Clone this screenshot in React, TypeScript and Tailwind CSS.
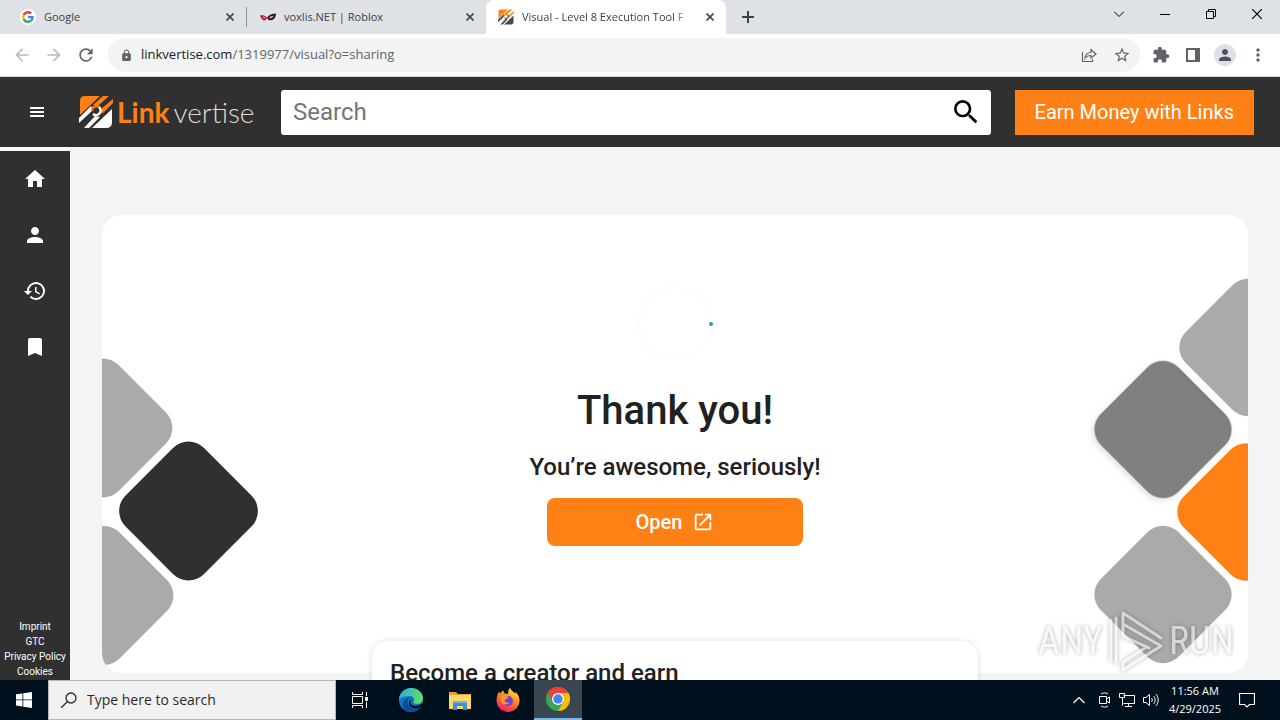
import type { ReactNode } from "react";
import {
  MdArrowBack,
  MdArrowForward,
  MdBookmark,
  MdExtension,
  MdHistory,
  MdHome,
  MdLock,
  MdMoreVert,
  MdOpenInNew,
  MdPerson,
  MdRefresh,
  MdSearch,
  MdStarBorder,
} from "react-icons/md";

function GoogleIcon() {
  return (
    <svg viewBox="0 0 48 48" className="size-3">
      <path fill="#ea4335" d="M24 9.5c3.54 0 6.71 1.22 9.21 3.6l6.85-6.85C35.9 2.38 30.47 0 24 0 14.62 0 6.51 5.38 2.56 13.22l7.98 6.19C12.43 13.72 17.74 9.5 24 9.5z" />
      <path fill="#4285f4" d="M46.98 24.55c0-1.57-.15-3.09-.38-4.55H24v9.02h12.94c-.58 2.96-2.26 5.48-4.78 7.18l7.73 6c4.51-4.18 7.09-10.36 7.09-17.65z" />
      <path fill="#fbbc05" d="M10.53 28.59c-.48-1.45-.76-2.99-.76-4.59s.27-3.14.76-4.59l-7.98-6.19C.92 16.46 0 20.12 0 24c0 3.88.92 7.54 2.56 10.78l7.97-6.19z" />
      <path fill="#34a853" d="M24 48c6.48 0 11.93-2.13 15.89-5.81l-7.73-6c-2.15 1.45-4.92 2.3-8.16 2.3-6.26 0-11.57-4.22-13.47-9.91l-7.98 6.19C6.51 42.62 14.62 48 24 48z" />
    </svg>
  );
}

function MaskIcon() {
  return (
    <svg viewBox="0 0 16 16" className="size-4">
      <path fill="#b3202f" d="M0 6.500c2-.6 4.500-.4 7 2-.3 2-1.500 3-3 3C2.500 11.300 1 9.500 0 6.500z" />
      <path fill="#3a1418" d="M7 8.500c2-2.800 5-4 9-4-.2 4-2 6.500-5 6.800-2 .2-3.500-.8-4-2.800z" />
      <path fill="#e9a9af" d="M2.500 7.800c1.500 0 2.500.5 3 1.300-1.200.7-2.500.2-3-1.300zM9 9c1-1.500 2.500-2.300 4.500-2.300C12.800 8.700 11 9.900 9 9z" />
    </svg>
  );
}

function LinkMark({ lower, className }: { lower: string; className: string }) {
  return (
    <svg viewBox="0 0 34 34" className={className} fill="none">
      <path fill="#ff8014" d="M1 6q0-5 5-5h15L1 20z" />
      <path fill="#ff8014" d="M24 1h6L19 11l-5-1z" />
      <path fill="#ff8014" d="M34 4v4L23 19l-2-4z" />
      <path fill={lower} d="M0 28v-5l12-12 2 4z" />
      <path fill={lower} d="M33 14v13q0 6-6 6H13z" />
      <path fill={lower} d="M5 33l11-12 5 1-11 11z" />
      <path stroke="#ff8014" strokeWidth="2.200" d="M13 16a4.500 4.500 0 0 1 7-4" />
      <path stroke={lower} strokeWidth="2.400" d="M20 12a4.500 4.500 0 1 1-6 7" />
    </svg>
  );
}

function CloseIcon() {
  return (
    <svg viewBox="0 0 8 8" className="size-2" stroke="#45494d" strokeWidth="1.700">
      <path d="M.5.5l7 7M7.500.5l-7 7" />
    </svg>
  );
}

type TabProps = { icon: ReactNode; title: string; active?: boolean };

function Tab({ icon, title, active }: TabProps) {
  return (
    <div className={active ? "flex items-center w-60 h-full pl-3 pr-2 rounded-t-lg bg-white" : "flex items-center w-60 h-full pl-[14px] pr-2"}>
      <span className="flex items-center justify-center size-4 mr-2 shrink-0">{icon}</span>
      <span className={active ? "flex-1 overflow-hidden whitespace-nowrap mr-2 mask-r-from-88% mask-r-to-100%" : "flex-1 overflow-hidden whitespace-nowrap"}>{title}</span>
      <button aria-label={`Close ${title}`} className="shrink-0 p-1">
        <CloseIcon />
      </button>
    </div>
  );
}

function TabStrip() {
  return (
    <div className="flex items-center h-[34px] pl-[6px] bg-[#dee1e6] text-[#3c4043] text-[11px] font-['Open_Sans','Noto_Sans',sans-serif]">
      <Tab title="Google" icon={<span className="flex items-center justify-center size-4 rounded-full bg-white"><GoogleIcon /></span>} />
      <span className="w-px h-5 -mr-px bg-[#8a8d92]" />
      <Tab title="voxlis.NET | Roblox" icon={<MaskIcon />} />
      <Tab active title="Visual - Level 8 Execution Tool F" icon={<LinkMark lower="#4a4a4e" className="size-4" />} />
      <button aria-label="New tab" className="p-4">
        <svg viewBox="0 0 12 12" className="size-3" stroke="#3c4043" strokeWidth="2">
          <path d="M6 0v12M0 6h12" />
        </svg>
      </button>
      <div className="flex items-center gap-9 ml-auto mb-[6px] pr-[18px] text-black">
        <button aria-label="Search tabs">
          <svg viewBox="0 0 10 10" className="size-[10px]" fill="none" stroke="currentColor">
            <path d="M0 2.500l5 5 5-5" />
          </svg>
        </button>
        <button aria-label="Minimize">
          <svg viewBox="0 0 10 10" className="size-[10px]" stroke="currentColor">
            <path d="M0 5.500h10" />
          </svg>
        </button>
        <button aria-label="Restore">
          <svg viewBox="0 0 10 10" className="size-[10px]" fill="none" stroke="currentColor">
            <path d="M.5 2.500h7v7h-7zM2.500 2.500v-2h7v7h-2" />
          </svg>
        </button>
        <button aria-label="Close window">
          <svg viewBox="0 0 10 10" className="size-[10px]" stroke="currentColor" strokeWidth="1.200">
            <path d="M0 0l10 10M10 0L0 10" />
          </svg>
        </button>
      </div>
    </div>
  );
}

function Toolbar() {
  return (
    <div className="flex items-center h-[43px] px-3 border-b border-[#d5d7d9] bg-white text-[#5f6368]">
      <button aria-label="Back" className="mr-3 text-[#b9bbbe]"><MdArrowBack className="size-5" /></button>
      <button aria-label="Forward" className="mr-3 text-[#b9bbbe]"><MdArrowForward className="size-5" /></button>
      <button aria-label="Reload" className="mr-3"><MdRefresh className="size-5" /></button>
      <div className="flex items-center flex-1 h-[34px] pl-3 pr-[9px] rounded-full bg-[#f1f3f4] font-['Open_Sans','Noto_Sans',sans-serif] text-[13px]">
        <MdLock className="size-[13px] mr-2" />
        <p className="flex-1"><span className="text-[#202124]">linkvertise.com</span>/1319977/visual?o=sharing</p>
        <button aria-label="Share" className="mr-4">
          <svg viewBox="0 0 16 16" className="size-4" fill="none" stroke="currentColor" strokeWidth="1.200">
            <path d="M1.500 5v9.500h10V12M4 11c.5-4 3-5.500 6-5.500V2.500L15 7l-5 4V8.500c-2.500 0-4.500.5-6 2.500z" />
          </svg>
        </button>
        <button aria-label="Bookmark this tab"><MdStarBorder className="size-[18px]" /></button>
      </div>
      <button aria-label="Extensions" className="ml-3"><MdExtension className="size-[18px]" /></button>
      <button aria-label="Side panel" className="ml-4">
        <svg viewBox="0 0 14 14" className="size-[14px]" fill="none" stroke="currentColor" strokeWidth="2">
          <path d="M1 1h12v12H1z" />
          <path fill="currentColor" stroke="none" d="M9 0h5v14H9z" />
        </svg>
      </button>
      <button aria-label="Profile" className="flex items-center justify-center size-[22px] ml-[14px] rounded-full bg-[#dee1e6] text-[#4d5168]">
        <MdPerson className="size-[18px]" />
      </button>
      <button aria-label="Menu" className="ml-3"><MdMoreVert className="size-5" /></button>
    </div>
  );
}

function Header() {
  return (
    <header className="flex items-center h-[70px] pr-[26px] bg-[#303030] text-white">
      <button aria-label="Open menu" className="ml-[30px] mr-[35px]">
        <svg viewBox="0 0 14 10" className="w-[14px] h-[10px]" fill="currentColor">
          <path d="M0 0h14v2H0zM0 4h14v2H0zM0 8h14v2H0z" />
        </svg>
      </button>
      <a href="#" className="flex items-center w-[178px] mr-6">
        <LinkMark lower="#ffffff" className="size-[34px] shrink-0 mr-1" />
        <span className="flex gap-1 text-[28px] leading-8 font-['Lato',sans-serif] whitespace-nowrap">
          <b className="text-[#ff8014]">Link</b>
          <span className="font-light text-[#dcdcdc]">vertise</span>
        </span>
      </a>
      <div className="flex items-center flex-1 h-[45px] pl-3 pr-[9px] rounded-[3px] bg-white">
        <input aria-label="Search" placeholder="Search" className="flex-1 min-w-0 text-2xl text-black placeholder:text-[#757575] outline-none" />
        <button aria-label="Submit search" className="text-black"><MdSearch className="size-8" /></button>
      </div>
      <button className="h-[45px] ml-6 px-5 bg-[#ff8014] text-xl">Earn Money with Links</button>
    </header>
  );
}

const NAV = [
  { label: "Home", Icon: MdHome },
  { label: "Account", Icon: MdPerson },
  { label: "History", Icon: MdHistory },
  { label: "Bookmarks", Icon: MdBookmark },
];

const LEGAL = ["Imprint", "GTC", "Privacy Policy", "Cookies"];

function Sidebar() {
  return (
    <aside className="flex flex-col items-center w-[70px] shrink-0 pt-4 pb-px border-t-4 border-[#fafafa] bg-[#303030] text-white">
      <nav className="flex flex-col gap-8">
        {NAV.map(({ label, Icon }) => (
          <a key={label} href="#" aria-label={label}><Icon className="size-6" /></a>
        ))}
      </nav>
      <div className="flex flex-col items-center mt-auto text-[10px] leading-[15px]">
        {LEGAL.map((label) => (
          <a key={label} href="#">{label}</a>
        ))}
      </div>
    </aside>
  );
}

function Diamond({ x, y, size, fill, shadow }: { x: number; y: number; size: number; fill: string; shadow?: boolean }) {
  return (
    <rect
      x={-size / 2}
      y={-size / 2}
      width={size}
      height={size}
      rx="22"
      fill={fill}
      transform={`translate(${x} ${y}) rotate(45)`}
      className={shadow ? "drop-shadow-md" : undefined}
    />
  );
}

function ThankYouCard() {
  return (
    <section className="relative flex flex-col items-center pt-[70px] pb-[127px] rounded-[20px] bg-white text-[#212121] overflow-hidden">
      <svg width="160" height="458" className="absolute left-0 top-0">
        <Diamond x={1} y={213} size={111} fill="#aaaaaa" />
        <Diamond x={86.5} y={296} size={111} fill="#303030" />
        <Diamond x={2} y={380.5} size={111} fill="#aaaaaa" />
      </svg>
      <svg width="160" height="458" className="absolute right-0 top-0">
        <Diamond x={160} y={132.5} size={110} fill="#aaaaaa" />
        <Diamond x={75} y={214.5} size={110} fill="#808080" shadow />
        <Diamond x={158} y={297} size={110} fill="#ff8014" />
        <Diamond x={75} y={379.5} size={110} fill="#aaaaaa" />
      </svg>
      <svg viewBox="0 0 76 76" className="size-[76px]" fill="none">
        <circle cx="38" cy="38" r="36" stroke="#fcfcfc" strokeWidth="2" />
        <circle cx="74" cy="39" r="2" fill="#1fa79a" />
      </svg>
      <h1 className="mt-[26px] text-[40px] leading-[48px] font-medium">Thank you!</h1>
      <h2 className="mt-4 text-2xl leading-8 font-medium">You’re awesome, seriously!</h2>
      <button className="flex items-center justify-center w-64 h-12 mt-[15px] rounded-lg bg-[#ff8014] text-white text-xl font-medium">
        Open <MdOpenInNew className="size-[22px] ml-[10px]" />
      </button>
    </section>
  );
}

function Watermark() {
  return (
    <div className="absolute right-[46px] bottom-2 flex items-center opacity-60 text-[38px] leading-10 text-[#f4f4f4] drop-shadow-[0_0_2px_rgba(0,0,0,0.5)] font-['Liberation_Sans_Narrow','Roboto_Condensed',sans-serif]">
      ANY
      <svg viewBox="0 0 66 62" className="w-[66px] h-[62px]" fill="none" stroke="#f4f4f4" strokeWidth="3" strokeLinejoin="round" strokeLinecap="round">
        <path d="M8 10v40M13 8v44M58 28L20 3v23l26 12M20 26V14l38 22-38 24v-8l22-14" />
      </svg>
      RUN
    </div>
  );
}

function EdgeIcon() {
  return (
    <svg viewBox="0 0 24 24" className="size-6">
      <defs>
        <linearGradient id="edge-top" x1="0" y1="0" x2="1" y2=".3">
          <stop stopColor="#2aa7e8" />
          <stop offset="1" stopColor="#5fdc6a" />
        </linearGradient>
      </defs>
      <circle cx="12" cy="12" r="12" fill="#1273c8" />
      <path fill="url(#edge-top)" d="M0 12C0 5 5.500 0 12 0c7 0 12 5 12 10 0 4-3 6-6 6-2.500 0-4-1-3.500-2 2-4-1-6-4-6C6 8 2 9 0 12z" />
      <path fill="#0b4c97" d="M9 12c-2 6 4 10 12 7.500C17 25 8 25.500 4.500 20 2.500 15 5 11 11 9c-1 .8-1.600 1.800-2 3z" />
      <path fill="#000d18" d="M13.500 11.500c-3 1-2.500 5 .5 6 3 1 6 0 9-2l1 1.500-3 2.500c-6 2-12-1-11-5 .3-1.500 1.500-3 3.500-3z" />
    </svg>
  );
}

function FolderIcon() {
  return (
    <svg viewBox="0 0 22 19" className="w-[22px] h-[19px]">
      <path fill="#e8a33a" d="M0 1h7l2 2h13v14H0z" />
      <path fill="#ffd76b" d="M0 4h22v14H0z" />
      <path fill="#3f8fd0" d="M4 19v-8h14v8h-4v-4H8v4z" />
      <path fill="#6db6e8" d="M4 10h14v2H4z" />
    </svg>
  );
}

function FirefoxIcon() {
  return (
    <svg viewBox="0 0 24 24" className="size-6">
      <defs>
        <linearGradient id="fox" x1=".8" y1="0" x2=".3" y2="1">
          <stop stopColor="#fff14f" />
          <stop offset=".45" stopColor="#ff8a16" />
          <stop offset="1" stopColor="#f5156c" />
        </linearGradient>
      </defs>
      <path fill="url(#fox)" d="M14 0c1 3 4 3.500 5.500 6 0-1 0-1.500-.3-2.500C22 6 23.500 9 23.500 12.500 23.500 19 18 24 12 24S.5 19 .5 12.500C.5 9 1.500 6 3 3.500c.3 1 .6 1.500 1.200 2C5 4 6 3 7.500 2.500c0 1.500.5 2.500 2 3.200L12 6c0-2 .5-4.500 2-6z" />
      <circle cx="12" cy="13" r="5" fill="#7542d8" />
      <path fill="#ff9b21" d="M5 8c3-1.500 6-.5 7.500 2-2 0-2 1.500-4 2 0 2 2 3.500 5 2.500-1.500 2.500-6 3-8-.5C4.500 12 4.500 10 5 8z" />
    </svg>
  );
}

function ChromeIcon() {
  return (
    <svg viewBox="0 0 24 24" className="size-6">
      <circle cx="12" cy="12" r="12" fill="#34a853" />
      <path fill="#ea4335" d="M12 12L1.600 6a12 12 0 0 1 20.800 0z" />
      <path fill="#ea4335" d="M1.600 6L7 15l5-9h10.400A12 12 0 0 0 1.600 6z" />
      <path fill="#fbbc04" d="M22.400 6A12 12 0 0 1 12 24l5.200-9L12 6z" />
      <circle cx="12" cy="12" r="6" fill="#fff" />
      <circle cx="12" cy="12" r="4.700" fill="#4285f4" />
    </svg>
  );
}

function Taskbar() {
  return (
    <footer className="flex items-center h-10 bg-[#00111d] text-white shrink-0">
      <button aria-label="Start" className="flex items-center justify-center w-12 h-full">
        <svg viewBox="0 0 16 16" className="size-4" fill="#fff">
          <path d="M0 2.300l6.500-.9v6.100H0zM7.300 1.300L16 0v7.500H7.300zM0 8.300h6.500v6.200L0 13.600zM7.300 8.300H16V16l-8.700-1.300z" />
        </svg>
      </button>
      <label className="flex items-center w-72 h-full pl-3 border border-[#b8b8b8] bg-[#f1f1f1] text-[#2b2b2b]">
        <svg viewBox="0 0 16 16" className="size-4 mr-[10px]" fill="none" stroke="currentColor" strokeWidth="1.300">
          <circle cx="10" cy="6" r="5" />
          <path d="M6.500 9.500L0 16" />
        </svg>
        <input aria-label="Type here to search" placeholder="Type here to search" className="flex-1 min-w-0 text-sm placeholder:text-[#2b2b2b] outline-none font-['Open_Sans','Noto_Sans',sans-serif]" />
      </label>
      <button aria-label="Task view" className="flex items-center justify-center w-12 h-full">
        <svg viewBox="0 0 16 16" className="size-4" fill="none" stroke="#fff">
          <path d="M.5 0v2.500h10V0M.5 16v-2.500h10V16M.5 4.500h10v7H.5zM14.500 0v4M14.500 10v6" />
          <path fill="#fff" d="M13.500 5.500h2v3h-2z" />
        </svg>
      </button>
      <button aria-label="Edge" className="flex items-center justify-center w-[54px] h-full"><EdgeIcon /></button>
      <button aria-label="File Explorer" className="flex items-center justify-center w-11 h-full"><FolderIcon /></button>
      <button aria-label="Firefox" className="flex items-center justify-center w-[52px] h-full"><FirefoxIcon /></button>
      <button aria-label="Chrome" className="flex items-center justify-center w-12 h-full border-b-2 border-[#76b9ed] bg-[#3b4750]"><ChromeIcon /></button>
      <div className="flex items-center gap-2 ml-auto pr-[25px]">
        <svg viewBox="0 0 12 8" className="w-3 h-2 mr-[6px]" fill="none" stroke="#fff" strokeWidth="1.200">
          <path d="M.5 7L6 1.500 11.500 7" />
        </svg>
        <svg viewBox="0 0 12 16" className="w-3 h-4" fill="none" stroke="#fff">
          <path d="M.5 4.500h7v7h-7zM7.500 7l3-2v6l-3-2M2 2c2-1.500 5-1.500 7 0M2 14c2 1.500 5 1.500 7 0" />
        </svg>
        <svg viewBox="0 0 16 14" className="w-4 h-[14px]" fill="none" stroke="#fff">
          <path d="M4.500 2.500h11v8h-11M.5.5h5v4h-5zM3.500 4.500v8M6 13.500h7M9.500 10.500v3" />
        </svg>
        <svg viewBox="0 0 16 14" className="w-4 h-[14px]" fill="none" stroke="#fff">
          <path d="M.5 4.500H3l3.500-3v11L3 9.500H.5zM8.500 5c1 1 1 3 0 4M10.500 3c2.200 2 2.200 6 0 8M12.700 1c3.300 3 3.300 9 0 12" />
        </svg>
        <div className="w-14 text-center text-[11px] leading-[18px] font-['Open_Sans','Noto_Sans',sans-serif]">
          <p>11:56 AM</p>
          <p>4/29/2025</p>
        </div>
        <svg viewBox="0 0 16 16" className="size-4 ml-2" fill="none" stroke="#fff" strokeWidth="1.200">
          <path d="M.5 1.500h15v11h-5L8 15l-2.500-2.500h-5z" />
        </svg>
      </div>
    </footer>
  );
}

function App() {
  return (
    <div className="flex flex-col h-screen overflow-hidden font-['Roboto',sans-serif]">
      <TabStrip />
      <Toolbar />
      <Header />
      <div className="relative flex flex-1 min-h-0 bg-[#f4f4f4]">
        <Sidebar />
        <main className="flex-1 h-full px-8 pt-[68px] overflow-hidden">
          <ThankYouCard />
          <section className="relative max-w-[606px] mx-auto -mt-8 px-[18px] py-4 rounded-2xl bg-white shadow-[0_0_6px_rgba(0,0,0,0.12)] text-[#212121]">
            <h2 className="text-2xl leading-8 font-medium">Become a creator and earn</h2>
          </section>
        </main>
        <Watermark />
      </div>
      <Taskbar />
    </div>
  );
}

export default App;
